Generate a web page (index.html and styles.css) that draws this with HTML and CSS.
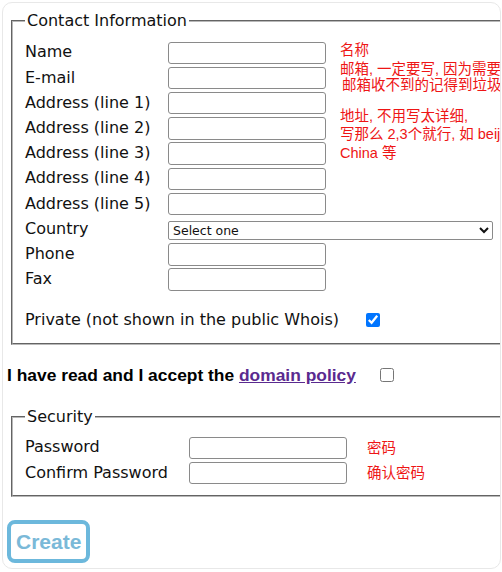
FILE: index.html
```html
<!DOCTYPE html>
<html lang="en">
<head>
<meta charset="utf-8">
<title>Create domain contact</title>
<link rel="stylesheet" href="styles.css">
</head>
<body>
<form class="page">
  <fieldset class="box">
    <legend class="box-title">Contact Information</legend>
    <div class="contact-grid">
      <div class="notes">
        <p class="note note-name">名称</p>
        <p class="note note-mail">邮箱, 一定要写, 因为需要验证<br><span class="indent">邮箱收不到的记得到垃圾箱看看</span></p>
        <p class="note note-addr">地址, 不用写太详细,<br>写那么 2,3个就行, 如 beijing<br>China 等</p>
      </div>
      <label class="lbl">Name</label><input class="field" type="text">
      <label class="lbl">E-mail</label><input class="field" type="text">
      <label class="lbl">Address (line 1)</label><input class="field" type="text">
      <label class="lbl">Address (line 2)</label><input class="field" type="text">
      <label class="lbl">Address (line 3)</label><input class="field" type="text">
      <label class="lbl">Address (line 4)</label><input class="field" type="text">
      <label class="lbl">Address (line 5)</label><input class="field" type="text">
      <label class="lbl">Country</label>
      <select class="country"><option>Select one</option></select>
      <label class="lbl">Phone</label><input class="field" type="text">
      <label class="lbl">Fax</label><input class="field" type="text">
    </div>
    <div class="private">
      <label class="private-label">Private (not shown in the public Whois)</label>
      <input class="check" type="checkbox" checked>
    </div>
  </fieldset>

  <div class="accept">
    <span>I have read and I accept the <a class="policy" href="#">domain policy</a></span>
    <input class="check accept-check" type="checkbox">
  </div>

  <fieldset class="box security">
    <legend class="box-title">Security</legend>
    <div class="security-grid">
      <label class="lbl">Password</label><input class="field" type="password"><span class="note sec-note">密码</span>
      <label class="lbl">Confirm Password</label><input class="field" type="password"><span class="note sec-note">确认密码</span>
    </div>
  </fieldset>

  <button class="create" type="button">Create</button>
</form>
</body>
</html>
```
FILE: styles.css
```css
html, body {
  margin: 0;
  padding: 0;
  background: #ffffff;
}

body {
  font-family: "DejaVu Sans", sans-serif;
  font-size: 16px;
  color: #111111;
}

.page {
  display: block;
  margin: 2px 1px 0 2px;
  border: 1px solid #e8e8e8;
  border-radius: 10px;
  overflow: hidden;
  padding: 8px 0 5px 4px;
}

.box {
  margin: 0 0 0 4px;
  width: 620px;
  border: 2px groove #b8b8b8;
  padding: 10.7px 12px 11.3px;
  box-sizing: border-box;
}

.box-title {
  padding: 0 2px;
  font-size: 16px;
  line-height: 20px;
}

.lbl {
  grid-column: 1;
  line-height: 20px;
  white-space: nowrap;
  margin-top: -1px;
}

.field {
  grid-column: 2;
  box-sizing: border-box;
  width: 158px;
  height: 22.4px;
  margin: 0;
  border: 1px solid #8a8a8a;
  border-radius: 3px;
  background: #fff;
  font-size: 13px;
}

.contact-grid {
  display: grid;
  grid-template-columns: 143px 158px auto;
  grid-auto-rows: 22.4px;
  row-gap: 2.8px;
  align-items: center;
}

.notes {
  grid-column: 3;
  grid-row: 1 / span 7;
  align-self: start;
  margin-left: 14px;
}

.note {
  margin: 0;
  font-family: "Liberation Sans", "Noto Sans CJK SC", sans-serif;
  font-size: 14.5px;
  color: #ee1515;
  white-space: nowrap;
}

.note-name {
  line-height: 16px;
}

.note-mail {
  margin-top: 3.3px;
  line-height: 16px;
}

.indent {
  padding-left: 2px;
}

.note-addr {
  margin-top: 13.7px;
  line-height: 18.5px;
}

.country {
  grid-column: 2 / span 2;
  align-self: end;
  width: 325px;
  height: 19px;
  margin: 0;
  border: 1px solid #8a8a8a;
  border-radius: 2px;
  background: #fff;
  font-family: "DejaVu Sans", sans-serif;
  font-size: 12.5px;
  color: #111;
}

.private {
  display: flex;
  align-items: center;
  height: 22.4px;
  margin-top: 18.4px;
}

.private-label {
  width: 341px;
  line-height: 20px;
  white-space: nowrap;
}

.check {
  width: 14px;
  height: 14px;
  margin: 0;
}

.accept {
  display: flex;
  align-items: center;
  margin-top: 20px;
  height: 20px;
  font-family: "Liberation Sans", sans-serif;
  font-weight: bold;
  font-size: 17.4px;
  line-height: 20px;
  color: #000;
  white-space: nowrap;
}

.policy {
  color: #5a2a8f;
  text-decoration: underline;
}

.accept-check {
  margin-left: 24px;
}

.security {
  margin-top: 22px;
  padding: 9.7px 12px 11px;
}

.security-grid {
  display: grid;
  grid-template-columns: 164px 158px auto;
  grid-auto-rows: 22.6px;
  row-gap: 2.7px;
  align-items: center;
}

.security-grid .field {
  grid-column: 2;
}

.sec-note {
  grid-column: 3;
  margin-left: 20px;
  line-height: 20px;
}

.create {
  display: block;
  margin-top: 23px;
  height: 43px;
  padding: 0 5px;
  border: 4px solid #6cb8dc;
  border-radius: 8px;
  background: #ffffff;
  font-family: "Liberation Sans", sans-serif;
  font-weight: bold;
  font-size: 21px;
  color: #7ab9d8;
}
```
